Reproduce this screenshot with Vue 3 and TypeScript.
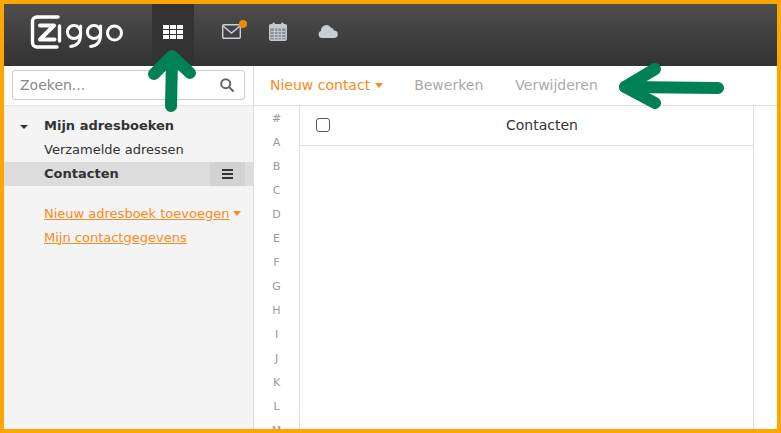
<script setup lang="ts">
const letters: string[] = ['#', 'A', 'B', 'C', 'D', 'E', 'F', 'G', 'H', 'I', 'J', 'K', 'L', 'M']
</script>

<template>
  <div class="frame">
    <div class="app">
      <header class="topbar">
        <svg class="logo" width="96" height="36" viewBox="0 0 96 36" fill="none" stroke="#fff" stroke-linecap="round" stroke-linejoin="round">
          <path d="M28 3H7a4.500 4.500 0 0 0-4.500 4.500v21a4.500 4.500 0 0 0 4.500 4.500h20" stroke-width="3.400" />
          <path d="M10 11.500h14L10 25.500h14.500" stroke-width="4" />
          <path d="M29.500 12v15" stroke-width="3.400" />
          <circle cx="44" cy="18" r="6.600" stroke-width="3" />
          <path d="M50.600 12v8c0 8-4 12-10 12.500" stroke-width="3" />
          <circle cx="64" cy="18" r="6.600" stroke-width="3" />
          <path d="M70.600 12v8c0 8-4 12-10 12.500" stroke-width="3" />
          <circle cx="84.500" cy="19" r="7" stroke-width="3" />
        </svg>
        <div class="tab active">
          <svg width="20" height="15" viewBox="0 0 20 15" fill="#fff">
            <rect x="0" y="0" width="6" height="4" /><rect x="7" y="0" width="6" height="4" /><rect x="14" y="0" width="6" height="4" />
            <rect x="0" y="5" width="6" height="4" /><rect x="7" y="5" width="6" height="4" /><rect x="14" y="5" width="6" height="4" />
            <rect x="0" y="10" width="6" height="4" /><rect x="7" y="10" width="6" height="4" /><rect x="14" y="10" width="6" height="4" />
          </svg>
        </div>
        <div class="tab mail">
          <svg width="19" height="15" viewBox="0 0 19 15" fill="none" stroke="#c9d1da" stroke-width="1.400">
            <rect x="0.700" y="0.700" width="17.600" height="13.600" rx="1" />
            <path d="M1 2l8.500 7L18 2" />
          </svg>
          <span class="dot"></span>
        </div>
        <div class="tab cal">
          <svg width="18" height="19" viewBox="0 0 18 19">
            <rect x="0.700" y="2.700" width="16.600" height="15.600" rx="1.500" fill="#8d9299" stroke="#c4c9cf" stroke-width="1.400" />
            <rect x="0.700" y="2.700" width="16.600" height="3.600" fill="#c4c9cf" />
            <path d="M2 9.500h14M2 12.500h14M2 15.500h14M5.500 6v12M9 6v12M12.500 6v12" stroke="#c4c9cf" stroke-width="1" />
            <rect x="3.500" y="0.500" width="2.400" height="4" rx="1" fill="#c4c9cf" />
            <rect x="12.100" y="0.500" width="2.400" height="4" rx="1" fill="#c4c9cf" />
          </svg>
        </div>
        <div class="tab cloud">
          <svg width="20" height="14" viewBox="0 0 20 14" fill="#c9ced4">
            <path d="M4 14a3.600 3.600 0 0 1-1-7 5.400 5.400 0 0 1 10-3.200A3.600 3.600 0 0 1 16 6.400a3.800 3.800 0 0 1 0 7.600z" />
          </svg>
        </div>
      </header>

      <div class="body">
        <aside class="sidebar">
          <div class="search-wrap">
            <div class="search">
              <span class="placeholder">Zoeken...</span>
              <svg width="14" height="14" viewBox="0 0 14 14" fill="none" stroke="#666" stroke-width="2" stroke-linecap="round">
                <circle cx="5.700" cy="5.700" r="4.500" />
                <path d="M9 9l4 4" />
              </svg>
            </div>
          </div>
          <div class="tree">
            <div class="row heading"><span class="caret dark"></span><b>Mijn adresboeken</b></div>
            <div class="row">Verzamelde adressen</div>
            <div class="row selected">
              <b>Contacten</b>
              <span class="menu-btn"><i></i><i></i><i></i></span>
            </div>
          </div>
          <div class="links">
            <div class="link-row"><a>Nieuw adresboek toevoegen</a><span class="caret orange"></span></div>
            <div class="link-row"><a>Mijn contactgegevens</a></div>
          </div>
        </aside>

        <main class="content">
          <div class="toolbar">
            <span class="primary">Nieuw contact</span><span class="caret orange big"></span>
            <span class="muted first">Bewerken</span>
            <span class="muted">Verwijderen</span>
          </div>
          <div class="panes">
            <div class="letters">
              <div v-for="l in letters" :key="l" class="letter">{{ l }}</div>
            </div>
            <div class="list">
              <div class="list-head">
                <span class="check"></span>
                <span class="title">Contacten</span>
              </div>
            </div>
            <div class="rest"></div>
          </div>
        </main>
      </div>

      <svg class="arrow up" width="60" height="74" viewBox="0 0 60 74" fill="none" stroke="#008055" stroke-width="12" stroke-linecap="round" stroke-linejoin="round">
        <path d="M27 62L28 16" />
        <path d="M10 30L28 12L46 29" />
      </svg>
      <svg class="arrow left" width="120" height="52" viewBox="0 0 120 52" fill="none" stroke="#008055" stroke-width="12" stroke-linecap="round" stroke-linejoin="round">
        <path d="M15 27L108 28" />
        <path d="M45 9L15 27L45 43" />
      </svg>
    </div>
  </div>
</template>

<style>
html, body { margin: 0; padding: 0; }
</style>

<style scoped>
.frame {
  width: 781px;
  height: 433px;
  box-sizing: border-box;
  border: 4px solid #ffa500;
  overflow: hidden;
  font-family: Verdana, "DejaVu Sans", sans-serif;
  font-size: 13px;
  color: #333;
  background: #fff;
}
.app { position: relative; width: 773px; height: 425px; overflow: hidden; display: flex; flex-direction: column; }
.topbar {
  height: 62px;
  flex: none;
  display: flex;
  background: linear-gradient(#4e4e4e, #323232);
}
.logo { margin: 10px 26px 0 26px; flex: none; }
.tab { height: 62px; display: flex; align-items: center; justify-content: center; position: relative; width: 42px; flex: none; padding-bottom: 8px; box-sizing: border-box; }
.tab.active { background: #333; margin-right: 16px; padding-bottom: 5px; }
.tab.mail { margin-right: 5px; }
.tab.cal { margin-right: 8px; }
.dot { position: absolute; width: 8px; height: 8px; border-radius: 50%; background: #f08a00; top: 16px; left: 29px; }
.body { flex: 1; display: flex; min-height: 0; }
.sidebar { width: 249px; flex: none; background: #f4f4f4; border-right: 1px solid #ddd; }
.search-wrap { height: 40px; box-sizing: border-box; padding: 4px 8px 0; background: #fff; border-bottom: 1px solid #e4e4e4; }
.search {
  height: 30px; box-sizing: border-box; border: 1px solid #ccc; border-radius: 3px; background: #fff;
  display: flex; align-items: center; justify-content: space-between; padding: 0 10px 0 7px;
}
.placeholder { color: #888; font-size: 14px; }
.tree { padding-top: 8px; }
.row { height: 24px; line-height: 24px; padding-left: 40px; position: relative; display: flex; align-items: center; }
.heading .caret { position: absolute; left: 16px; top: 11px; }
.selected { background: #dcdcdc; justify-content: space-between; }
.menu-btn { width: 35px; height: 24px; margin-right: 8px; background: #d2d2d2; display: flex; flex-direction: column; align-items: center; justify-content: center; gap: 2px; }
.menu-btn i { display: block; width: 11px; height: 2px; background: #333; }
.caret { display: inline-block; width: 0; height: 0; border-left: 4px solid transparent; border-right: 4px solid transparent; border-top: 4px solid #333; }
.caret.orange { border-top-color: #f98a1c; margin-left: 4px; border-left-width: 4.500px; border-right-width: 4.500px; border-top-width: 5px; }
.caret.big { margin-left: 5px; }
.links { padding-top: 15px; }
.link-row { height: 24px; padding-left: 40px; display: flex; align-items: center; }
.link-row a { color: #f98a1c; text-decoration: underline; }
.content { flex: 1; min-width: 0; display: flex; flex-direction: column; }
.toolbar { height: 40px; flex: none; box-sizing: border-box; border-bottom: 1px solid #ddd; display: flex; align-items: center; padding-left: 16px; padding-bottom: 1px; font-size: 14px; }
.primary { color: #f98a1c; }
.muted { color: #aaa; margin-left: 32px; }
.muted.first { margin-left: 31px; }
.panes { flex: 1; min-height: 0; display: flex; }
.letters { width: 45px; flex: none; border-right: 1px solid #ddd; text-align: center; padding-top: 1px; overflow: hidden; }
.letter { height: 24px; line-height: 24px; font-size: 11px; color: #999; }
.list { width: 453px; flex: none; border-right: 1px solid #ddd; }
.list-head { height: 40px; box-sizing: border-box; border-bottom: 1px solid #ddd; padding-bottom: 1px; display: flex; align-items: center; position: relative; padding-left: 16px; }
.check { width: 12px; height: 12px; border: 1px solid #556; border-radius: 3px; background: #fff; }
.title { position: absolute; left: 206px; font-size: 14px; }
.rest { flex: 1; }
.arrow { position: absolute; }
.arrow.up { left: 140px; top: 40px; }
.arrow.left { left: 606px; top: 56px; }
</style>
